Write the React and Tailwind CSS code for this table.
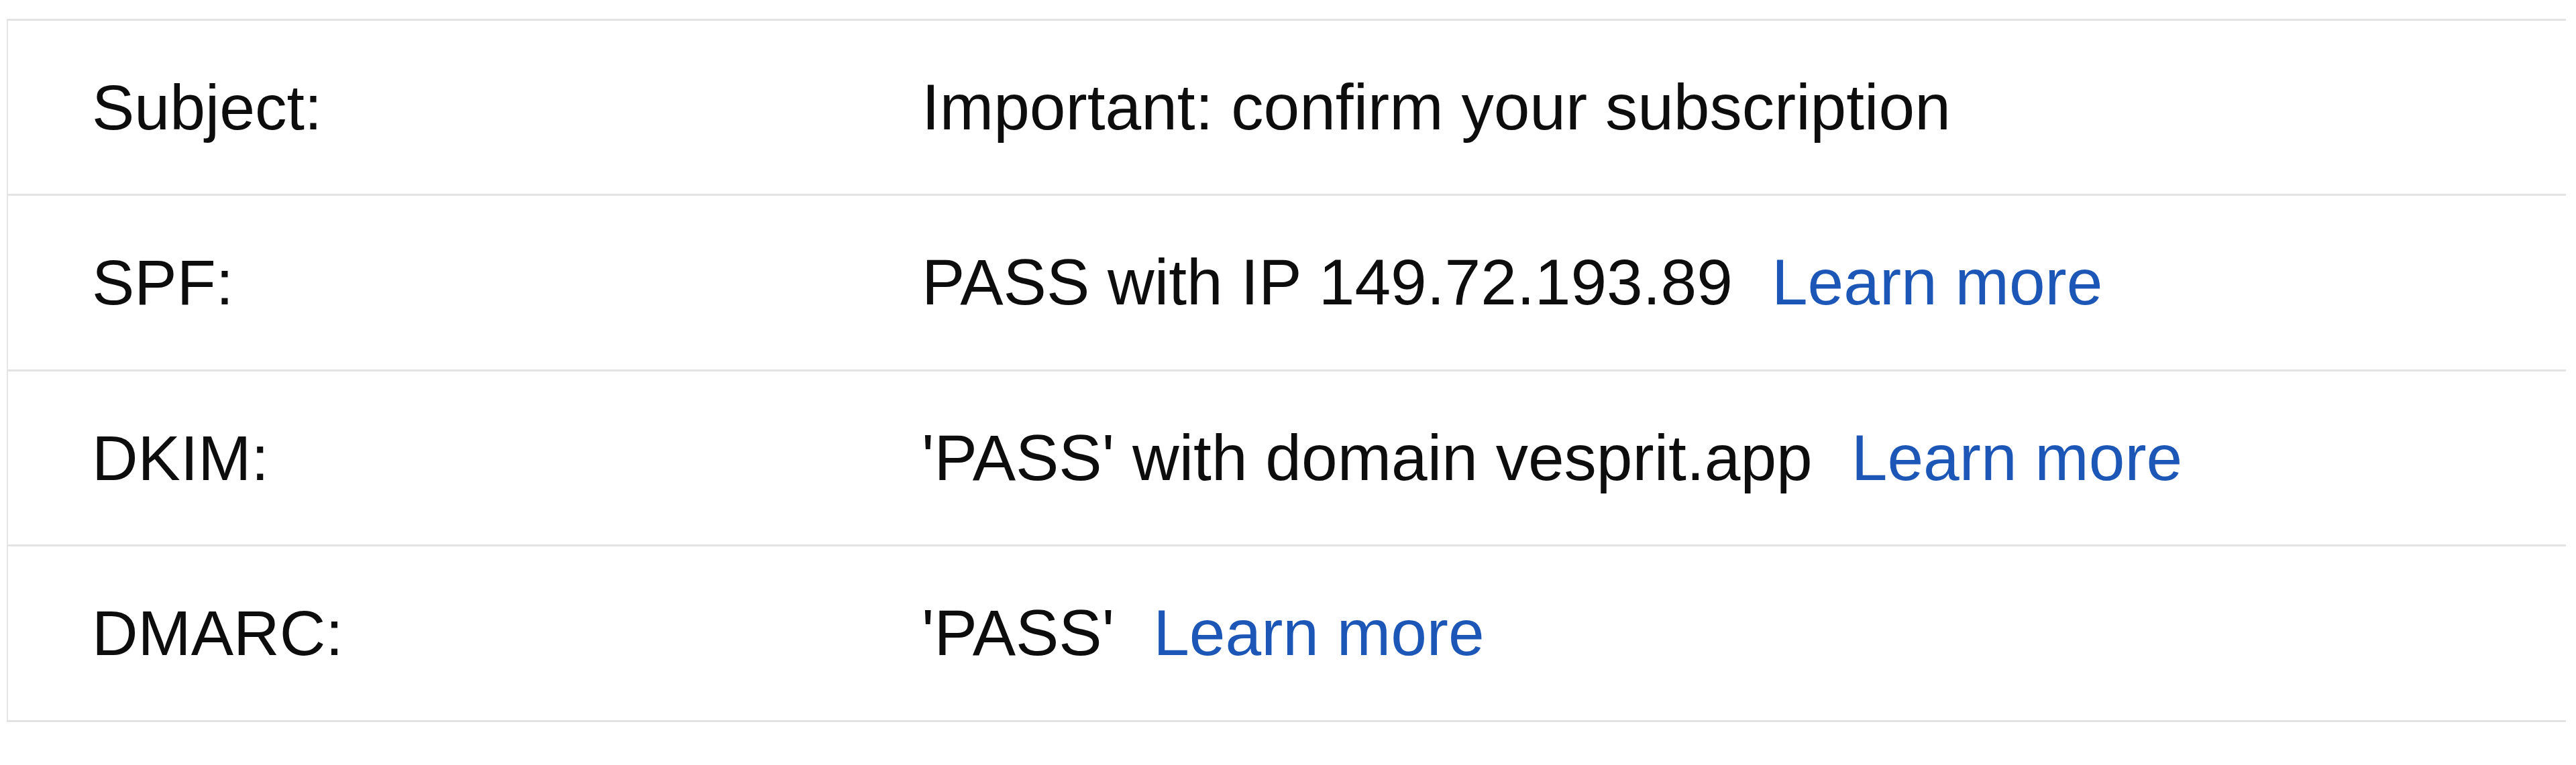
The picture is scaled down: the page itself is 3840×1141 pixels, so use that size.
import React from "react";

const rows = [
  { label: "Subject:", value: "Important: confirm your subscription", link: false, h: "h-[261px]" },
  { label: "SPF:", value: "PASS with IP 149.72.193.89", link: true, h: "h-[262px]" },
  { label: "DKIM:", value: "'PASS' with domain vesprit.app", link: true, h: "h-[261px]" },
  { label: "DMARC:", value: "'PASS'", link: true, h: "h-[262px]" },
];

export default function App() {
  return (
    <div
      className="w-[3840px] h-[1141px] bg-white pt-[28px] pl-[10px] overflow-hidden"
      style={{ fontFamily: '"Liberation Sans", Arial, sans-serif' }}
    >
      <div className="w-[3815px] border-l-2 border-[#e6e6e6] border-b-[3px] border-b-[#e3e3e3]">
        {rows.map((r) => (
          <div
            key={r.label}
            className={`flex items-center border-t-[3px] border-[#e3e3e3] ${r.h}`}
          >
            <div className="w-[1362px] shrink-0 pl-[125px] text-[95px] leading-none text-[#0d0d0d]">
              {r.label}
            </div>
            <div className="flex items-baseline text-[96.5px] leading-none text-[#0d0d0d] whitespace-nowrap">
              <span>{r.value}</span>
              {r.link && <a className="ml-[58px] text-[#1c57b8]">Learn more</a>}
            </div>
          </div>
        ))}
      </div>
    </div>
  );
}
